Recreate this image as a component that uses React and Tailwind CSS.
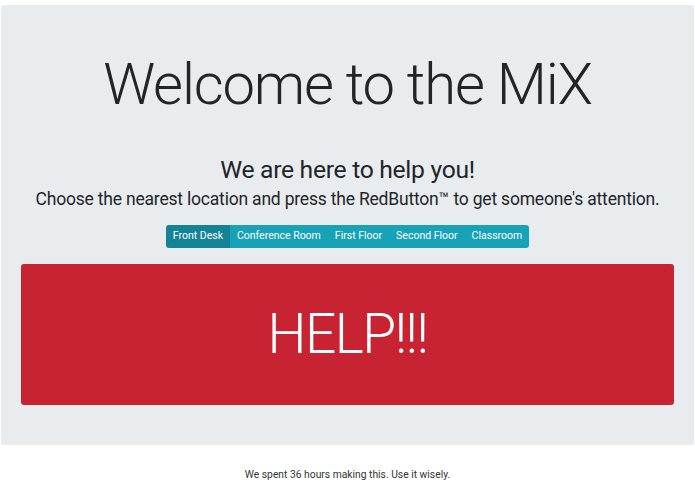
import React, { useState } from 'react';

const locations = ['Front Desk', 'Conference Room', 'First Floor', 'Second Floor', 'Classroom'];

export default function App() {
  const [active, setActive] = useState('Front Desk');

  return (
    <div className="min-h-screen bg-white font-['Roboto',sans-serif] text-[#212529] pt-[5px]">
      <div className="mx-[1px] h-[440px] bg-[#e9ecef] rounded-[3px] flex flex-col items-center pt-[45px] px-[20px]">
        <h1 className="text-[58px] font-light leading-[1.2] tracking-[-1.2px]">Welcome to the MiX</h1>

        <h3 className="mt-[35px] text-[24.7px] font-normal leading-[1.2] tracking-[-0.3px]">We are here to help you!</h3>
        <p className="mt-[4px] text-[17.5px] leading-[1.3] tracking-[-0.2px] whitespace-nowrap">
          Choose the nearest location and press the RedButton™ to get someone's attention.
        </p>

        <div className="mt-[14px] flex rounded-[3px] overflow-hidden">
          {locations.map(loc => (
            <button
              key={loc}
              onClick={() => setActive(loc)}
              className={`h-[23px] px-[7px] text-[10.5px] text-white leading-none ${active === loc ? 'bg-[#138496]' : 'bg-[#17a2b8]'}`}
            >
              {loc}
            </button>
          ))}
        </div>

        <button className="mt-[16px] w-full h-[141px] bg-[#c82333] rounded-[3px] text-white text-[55px] font-light tracking-[-1.5px] flex items-center justify-center">
          HELP!!!
        </button>
      </div>

      <p className="mt-[22px] text-center text-[10.3px] text-[#333]">We spent 36 hours making this. Use it wisely.</p>
    </div>
  );
}
